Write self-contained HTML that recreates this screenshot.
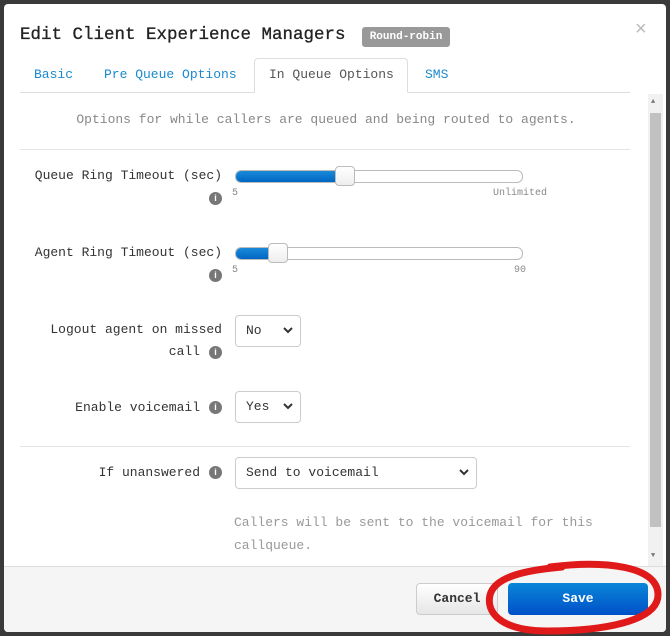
<!DOCTYPE html>
<html><head><meta charset="utf-8"><style>
*{box-sizing:border-box;margin:0;padding:0}
body{width:670px;height:636px;background:#3a3a3a;position:relative;overflow:hidden;font-family:"Liberation Mono",monospace;font-size:13px;color:#333}
.a{position:absolute;white-space:nowrap}
.modal{position:absolute;left:4px;top:4px;width:662px;height:628px;background:#fff;border-radius:4px;overflow:hidden}
.lbl{position:absolute;right:444px;text-align:right;color:#333}
.info{position:absolute;width:13px;height:13px;border-radius:50%;background:#777;color:#fff;font:bold 9px "Liberation Sans",sans-serif;text-align:center;line-height:13px}
.sl{position:absolute;left:231px;width:288px;height:13px;border:1px solid #bbb;border-radius:6px;background:#fff;overflow:hidden}
.fill{height:100%;background:linear-gradient(#1a8ad8,#0066c4)}
.th{position:absolute;width:20px;height:20px;border:1px solid #bbb;border-radius:4px;background:linear-gradient(#fff,#eee)}
.sel{position:absolute;left:231px;height:32px;border:1px solid #ccc;border-radius:4px;padding:0 10px;line-height:30px;color:#333}
.sel svg{position:absolute;right:7px;top:11px}
.sm{color:#888;font-size:10px}
</style></head><body>
<div class="modal">
<div class="a" style="left:16px;top:21px;font-size:17.5px;color:#222;-webkit-text-stroke:0.3px #222">Edit Client Experience Managers</div>
<div class="a" style="left:358px;top:23px;width:88px;height:20px;background:#999;border-radius:3px;color:#fff;font-weight:bold;font-size:11px;line-height:20px;text-align:center">Round-robin</div>
<div class="a" style="left:631px;top:14px;color:#bbb;font:20px 'Liberation Sans',sans-serif">×</div>
<div class="a" style="left:16px;top:88px;width:610px;border-top:1px solid #ddd"></div>
<div class="a" style="left:250px;top:54px;width:154px;height:35px;border:1px solid #ddd;border-bottom:1px solid #fff;border-radius:4px 4px 0 0;background:#fff"></div>
<div class="a" style="left:30px;top:63px;color:#1a8ad0">Basic</div>
<div class="a" style="left:100px;top:63px;color:#1a8ad0">Pre Queue Options</div>
<div class="a" style="left:265px;top:63px;color:#555">In Queue Options</div>
<div class="a" style="left:421px;top:63px;color:#1a8ad0">SMS</div>
<div class="a" style="left:644px;top:90px;width:15px;height:472px;background:#f1f1f1"></div>
<div class="a" style="left:646px;top:109px;width:11px;height:414px;background:#c1c1c1"></div>
<div class="a" style="left:647px;top:94px;font-size:7px;color:#777">▲</div>
<div class="a" style="left:647px;top:548px;font-size:7px;color:#777">▼</div>
<div class="a" style="left:0;top:108px;width:644px;text-align:center;color:#888">Options for while callers are queued and being routed to agents.</div>
<div class="a" style="left:16px;top:145px;width:610px;border-top:1px solid #e5e5e5"></div>
<div class="lbl" style="top:164px">Queue Ring Timeout (sec)</div>
<div class="info" style="left:205px;top:188px">i</div>
<div class="sl" style="top:166px"><div class="fill" style="width:108px"></div></div>
<div class="th" style="left:331px;top:162px"></div>
<div class="a sm" style="left:228px;top:184px">5</div>
<div class="a sm" style="left:489px;top:184px">Unlimited</div>
<div class="lbl" style="top:241px">Agent Ring Timeout (sec)</div>
<div class="info" style="left:205px;top:265px">i</div>
<div class="sl" style="top:243px"><div class="fill" style="width:40px"></div></div>
<div class="th" style="left:264px;top:239px"></div>
<div class="a sm" style="left:228px;top:261px">5</div>
<div class="a sm" style="left:510px;top:261px">90</div>
<div class="lbl" style="top:318px">Logout agent on missed</div>
<div class="lbl" style="top:340px;right:466px">call</div>
<div class="info" style="left:205px;top:342px">i</div>
<div class="sel" style="top:311px;width:66px">No<svg width="10" height="7"><path d="M1 1l4 4 4-4" stroke="#333" stroke-width="2" fill="none"/></svg></div>
<div class="lbl" style="top:396px;right:466px">Enable voicemail</div>
<div class="info" style="left:205px;top:397px">i</div>
<div class="sel" style="top:387px;width:66px">Yes<svg width="10" height="7"><path d="M1 1l4 4 4-4" stroke="#333" stroke-width="2" fill="none"/></svg></div>
<div class="a" style="left:16px;top:442px;width:610px;border-top:1px solid #e5e5e5"></div>
<div class="lbl" style="top:461px;right:466px">If unanswered</div>
<div class="info" style="left:205px;top:462px">i</div>
<div class="sel" style="top:453px;width:242px">Send to voicemail<svg width="10" height="7"><path d="M1 1l4 4 4-4" stroke="#333" stroke-width="2" fill="none"/></svg></div>
<div class="a" style="left:230px;top:507px;color:#999;line-height:23px;white-space:normal;width:380px">Callers will be sent to the voicemail for this callqueue.</div>
<div class="a" style="left:0;top:562px;width:662px;height:66px;background:#f5f5f5;border-top:1px solid #ddd"></div>
<div class="a" style="left:412px;top:579px;width:82px;height:32px;border:1px solid #ccc;border-radius:4px;background:linear-gradient(#fff,#e6e6e6);font-weight:bold;line-height:30px;text-align:center;color:#333">Cancel</div>
<div class="a" style="left:504px;top:579px;width:140px;height:32px;border-radius:4px;background:linear-gradient(#0a86d8,#0050c8);font-weight:bold;line-height:32px;text-align:center;color:#fff">Save</div>
</div>
<svg class="a" style="left:0;top:0" width="670" height="636"><path d="M550 567 C605 560 657 566 658 594 C659 622 600 631 548 631 C500 631 486 612 490 595 C495 576 528 570 562 567" stroke="#e01a1a" stroke-width="7" fill="none" stroke-linecap="round"/></svg>
</body></html>
